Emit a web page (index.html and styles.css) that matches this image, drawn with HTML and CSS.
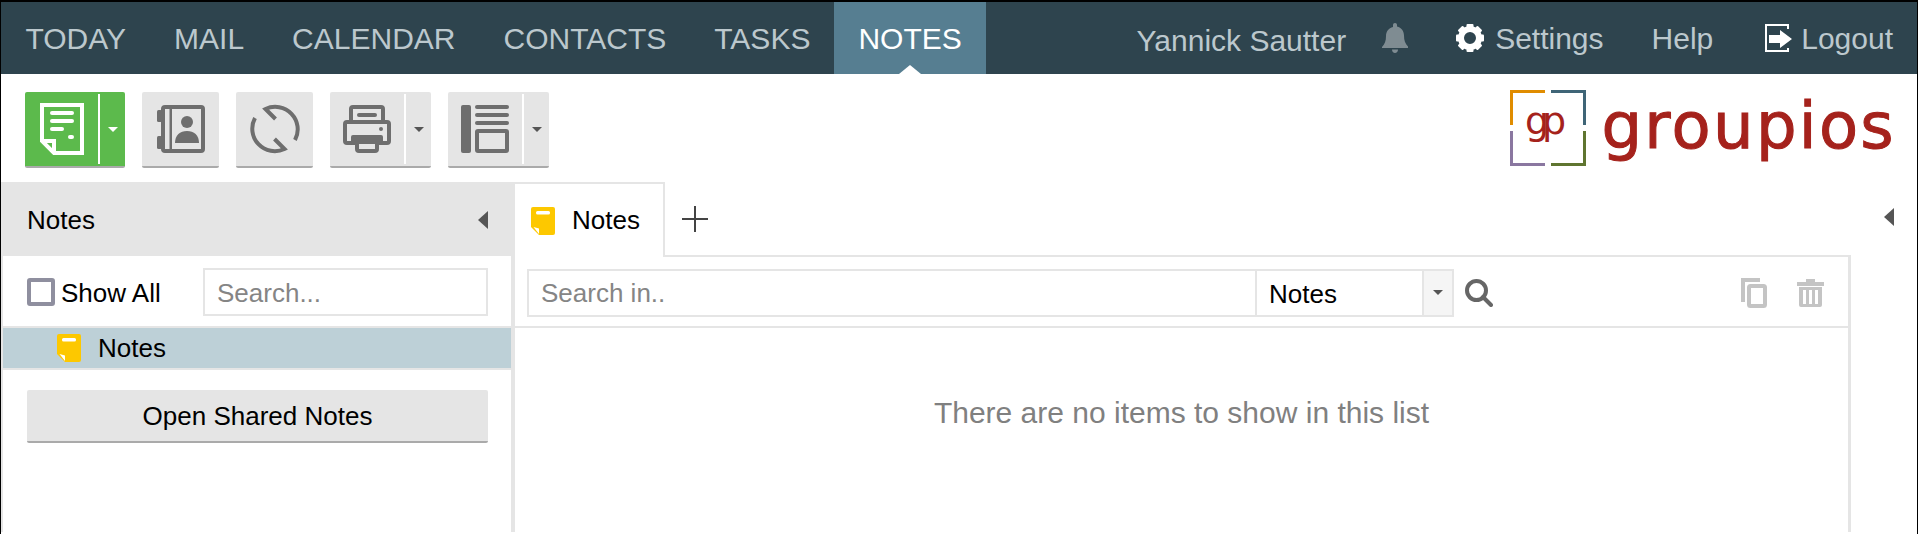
FILE: index.html
```html
<!DOCTYPE html>
<html lang="en">
<head>
  <meta charset="UTF-8" />
  <title>Notes</title>
  <link rel="stylesheet" href="styles.css">
</head>
<body>
  <div class="nav">
    <a class="tab">TODAY</a>
    <a class="tab">MAIL</a>
    <a class="tab">CALENDAR</a>
    <a class="tab">CONTACTS</a>
    <a class="tab">TASKS</a>
    <a class="tab active">NOTES</a>
    <div class="userbar">
      <span class="username">Yannick Sautter</span>
      <svg class="bell" width="26" height="30" viewBox="0 0 26 30"><path d="M13 0c1.200 0 2 .9 2 2v1.400c4.500 1 7 4.600 7 9.100 0 5 1.200 8 4 11v1.500H0V24c2.800-3 4-6 4-11 0-4.500 2.500-8.100 7-9.100V2c0-1.100.8-2 2-2zM10 26.500h6c0 2-1.300 3.500-3 3.500s-3-1.500-3-3.500z"/></svg>
      <a class="userlink settings">
        <svg width="28" height="28" viewBox="0 0 28 28"><circle cx="14" cy="14" r="9" fill="none" stroke="#fff" stroke-width="6"/><g fill="#fff"><rect x="10.500" y="0" width="7" height="6" rx="1"/><rect x="10.500" y="22" width="7" height="6" rx="1"/><rect x="10.500" y="0" width="7" height="6" rx="1" transform="rotate(45 14 14)"/><rect x="10.500" y="22" width="7" height="6" rx="1" transform="rotate(45 14 14)"/><rect x="10.500" y="0" width="7" height="6" rx="1" transform="rotate(90 14 14)"/><rect x="10.500" y="22" width="7" height="6" rx="1" transform="rotate(90 14 14)"/><rect x="10.500" y="0" width="7" height="6" rx="1" transform="rotate(135 14 14)"/><rect x="10.500" y="22" width="7" height="6" rx="1" transform="rotate(135 14 14)"/></g></svg>
        <span class="lbl">Settings</span>
      </a>
      <a class="userlink help"><span class="lbl">Help</span></a>
      <a class="userlink logout">
        <svg width="27" height="28" viewBox="0 0 27 28"><path d="M23 5V1H1v26h22v-3" fill="none" stroke="#fff" stroke-width="2"/><path d="M4 11h11V6l12 9-12 9v-5H4z" fill="#fff"/></svg>
        <span class="lbl">Logout</span>
      </a>
    </div>
  </div>

  <div class="toolbar">
    <div class="btn green">
      <span class="btn-main">
        <svg width="44" height="52" viewBox="0 0 44 52"><path d="M2 2h40v48H14L2 38z" fill="none" stroke="#fff" stroke-width="4"/><path d="M2 38h12v12" fill="none" stroke="#fff" stroke-width="4"/><g fill="#fff"><rect x="10" y="8" width="24" height="4" rx="2"/><rect x="10" y="16" width="24" height="4" rx="2"/><rect x="10" y="24" width="14" height="4" rx="2"/><rect x="28" y="32" width="6" height="4" rx="2"/></g></svg>
      </span>
      <span class="btn-drop"><i class="caret"></i></span>
    </div>
    <div class="btn">
      <span class="btn-main">
        <svg width="48" height="48" viewBox="0 0 48 48"><rect x="6" y="2" width="40" height="44" rx="2" fill="none" stroke="#6e6e6e" stroke-width="4"/><rect x="12.500" y="2" width="2.500" height="44" fill="#6e6e6e"/><rect x="0" y="5" width="5" height="12" rx="1.500" fill="#6e6e6e"/><rect x="0" y="31" width="5" height="13" rx="1.500" fill="#6e6e6e"/><circle cx="30" cy="17" r="6" fill="#6e6e6e"/><path d="M18 38c0-8 5-12 12-12s12 4 12 12z" fill="#6e6e6e"/></svg>
      </span>
    </div>
    <div class="btn">
      <span class="btn-main">
        <svg width="52" height="52" viewBox="0 0 52 52"><path d="M26.500 16L16.500 6A22.500 22.500 0 0 1 46 37M25.500 36L35.500 46A22.500 22.500 0 0 1 6 15" fill="none" stroke="#6e6e6e" stroke-width="4"/></svg>
      </span>
    </div>
    <div class="btn">
      <span class="btn-main wide">
        <svg width="48" height="48" viewBox="0 0 48 48"><rect x="8" y="2" width="32" height="22" rx="2" fill="#e5e5e5" stroke="#6e6e6e" stroke-width="4"/><rect x="14" y="8" width="20" height="4" rx="2" fill="#6e6e6e"/><rect x="2" y="17" width="44" height="21" rx="2" fill="#e5e5e5" stroke="#6e6e6e" stroke-width="4"/><circle cx="38" cy="24" r="2" fill="#6e6e6e"/><rect x="14" y="36" width="20" height="10" rx="2" fill="#e5e5e5" stroke="#6e6e6e" stroke-width="4"/><rect x="8" y="30" width="32" height="9" rx="2" fill="#6e6e6e"/></svg>
      </span>
      <span class="btn-drop"><i class="caret dark"></i></span>
    </div>
    <div class="btn">
      <span class="btn-main wide">
        <svg width="48" height="48" viewBox="0 0 48 48"><g fill="#6e6e6e"><rect x="0" y="0" width="10" height="48" rx="2"/><rect x="14" y="0" width="34" height="4" rx="2"/><rect x="14" y="8" width="34" height="4" rx="2"/><rect x="14" y="16" width="34" height="4" rx="2"/></g><rect x="16" y="26" width="30" height="20" rx="1" fill="none" stroke="#6e6e6e" stroke-width="4"/></svg>
      </span>
      <span class="btn-drop"><i class="caret dark"></i></span>
    </div>
    <div class="logo">
      <svg width="76" height="76" viewBox="0 0 76 76">
        <path d="M35 1.500H1.500V35" fill="none" stroke="#e08c00" stroke-width="3"/>
        <path d="M41 1.500h33.500V35" fill="none" stroke="#3f6577" stroke-width="3"/>
        <path d="M1.500 41v33.500H35" fill="none" stroke="#8a77a0" stroke-width="3"/>
        <path d="M74.500 41v33.500H41" fill="none" stroke="#5f7530" stroke-width="3"/>
        <text x="15" y="44" class="logo-mark">gp</text>
      </svg>
      <span class="logo-text">groupios</span>
    </div>
  </div>

  <div class="main">
    <div class="side">
      <div class="side-head">
        <span>Notes</span>
        <i class="arrow-left"></i>
      </div>
      <div class="side-filter">
        <span class="check"></span>
        <span class="check-label">Show All</span>
        <input class="side-search" type="text" placeholder="Search...">
      </div>
      <div class="tree-row">
        <svg class="note" width="24" height="28" viewBox="0 0 24 28"><path d="M2 0h20a2 2 0 0 1 2 2v24a2 2 0 0 1-2 2H8l-8-8V2a2 2 0 0 1 2-2z" fill="#fdc800"/><rect x="5" y="4" width="14" height="3.500" rx="1.500" fill="#fff"/><path d="M2.500 20L8 21.500V27z" fill="#fff"/></svg>
        <span class="tree-label">Notes</span>
      </div>
      <div class="side-action">
        <a class="open-shared">Open Shared Notes</a>
      </div>
    </div>

    <div class="content">
      <div class="tabs">
        <div class="doc-tab">
          <svg class="note" width="24" height="28" viewBox="0 0 24 28"><path d="M2 0h20a2 2 0 0 1 2 2v24a2 2 0 0 1-2 2H8l-8-8V2a2 2 0 0 1 2-2z" fill="#fdc800"/><rect x="5" y="4" width="14" height="3.500" rx="1.500" fill="#fff"/><path d="M2.500 20L8 21.500V27z" fill="#fff"/></svg>
          <span>Notes</span>
        </div>
        <svg class="plus" width="26" height="26" viewBox="0 0 26 26"><path d="M13 0v26M0 13h26" stroke="#444" stroke-width="2"/></svg>
      </div>
      <div class="panel">
        <div class="filter">
          <div class="search-group">
            <input class="search-in" type="text" placeholder="Search in..">
            <span class="scope">Notes</span>
            <span class="scope-drop"><i class="caret dark"></i></span>
          </div>
          <svg class="search-ico" width="28" height="28" viewBox="0 0 28 28"><circle cx="11.500" cy="11.500" r="9.500" fill="none" stroke="#666" stroke-width="4"/><path d="M18 18l8 8" stroke="#666" stroke-width="4" stroke-linecap="round"/></svg>
          <div class="actions">
            <svg width="27" height="30" viewBox="0 0 27 30"><path d="M20 2H3v22" fill="none" stroke="#c4c4c4" stroke-width="4"/><rect x="9" y="8" width="16" height="20" rx="1.500" fill="none" stroke="#c4c4c4" stroke-width="4"/></svg>
            <svg width="27" height="28" viewBox="0 0 27 28"><path d="M0 3h9V0h9v3h9v4H0z" fill="#c4c4c4"/><path d="M2 8h23v18a2 2 0 0 1-2 2H4a2 2 0 0 1-2-2zM6 11v14h3V11zM12 11v14h3V11zM18 11v14h3V11z" fill="#c4c4c4" fill-rule="evenodd"/></svg>
          </div>
        </div>
        <div class="empty">There are no items to show in this list</div>
      </div>
    </div>

    <div class="right-rail"><i class="arrow-left"></i></div>
  </div>
</body>
</html>
```

FILE: styles.css
```css
html, body {
  height: 100%;
}

body {
  margin: 0;
  border-top: 2px solid #000;
  border-left: 1px solid #000;
  border-right: 1px solid #000;
  box-sizing: border-box;
  font-family: "Liberation Sans", Arial, sans-serif;
  font-size: 26px;
  color: #000;
  background: #fff;
  overflow: hidden;
}

.nav {
  display: flex;
  height: 72px;
  background: #2e444e;
  color: #bcc8cd;
  padding-left: 0.5px;
  font-size: 30px;
}

.tab {
  display: flex;
  align-items: center;
  padding: 1px 24px 0;
  position: relative;
}

.tab.active {
  background: #567e91;
  color: #fff;
}

.tab.active::after {
  content: "";
  position: absolute;
  left: 50%;
  bottom: 0;
  margin-left: -11px;
  border-left: 11px solid transparent;
  border-right: 11px solid transparent;
  border-bottom: 9px solid #fff;
}

.userbar {
  margin-left: auto;
  display: flex;
  align-items: center;
  padding-right: 24px;
}

.username {
  padding-top: 6px;
}

.bell {
  fill: #7f8c92;
  margin-left: 36px;
}

.userlink {
  display: flex;
  align-items: center;
}

.userlink .lbl {
  padding-top: 2px;
}

.settings {
  gap: 11px;
  margin-left: 48px;
}

.help {
  margin-left: 48px;
}

.logout {
  gap: 9px;
  margin-left: 52px;
}

.toolbar {
  display: flex;
  height: 108px;
  box-sizing: border-box;
  padding: 18px 21px 0 24px;
  gap: 17px;
  align-items: flex-start;
}

.btn {
  display: flex;
  height: 74px;
  background: #e5e5e5;
  border-bottom: 2px solid #aaa;
  border-radius: 2px;
}

.btn.green {
  background: #5cba4c;
}

.btn-main {
  display: flex;
  align-items: center;
  justify-content: center;
  width: 77px;
}

.btn.green .btn-main {
  width: 73px;
}

.btn-main.wide {
  width: 74px;
}

.btn-drop {
  display: flex;
  align-items: center;
  justify-content: center;
  box-sizing: border-box;
  width: 27px;
  border-left: 2px solid #fff;
  margin: 2px 0;
}

.caret {
  width: 0;
  height: 0;
  border-left: 5px solid transparent;
  border-right: 5px solid transparent;
  border-top: 5px solid #fff;
}

.caret.dark {
  border-top-color: #555;
}

.logo {
  margin-left: auto;
  display: flex;
  align-items: flex-start;
  gap: 15px;
  margin-top: -2px;
}

.logo-mark {
  font-family: "DejaVu Sans", sans-serif;
  font-size: 38px;
  letter-spacing: -7px;
  fill: #a5221c;
}

.logo-text {
  font-family: "DejaVu Sans", sans-serif;
  font-size: 64px;
  letter-spacing: 2.300px;
  line-height: 64px;
  color: #a5221c;
  -webkit-text-stroke: 1px #a5221c;
  margin-top: 4px;
}

.main {
  display: flex;
  height: 350px;
}

.side {
  width: 508px;
  border-left: 2px solid #e5e5e5;
  border-right: 4px solid #e5e5e5;
}

.side-head {
  display: flex;
  align-items: center;
  justify-content: space-between;
  box-sizing: border-box;
  height: 74px;
  padding: 2px 23px 0 24px;
  background: #e5e5e5;
}

.arrow-left {
  display: block;
  width: 0;
  height: 0;
  border-top: 9px solid transparent;
  border-bottom: 9px solid transparent;
  border-right: 10px solid #555;
}

.side-filter {
  display: flex;
  align-items: center;
  box-sizing: border-box;
  height: 70px;
  padding: 2px 23px 0 24px;
}

.check {
  width: 28px;
  height: 28px;
  box-sizing: border-box;
  border: 4px solid #8f8f9f;
  border-radius: 3px;
}

.check-label {
  margin-left: 6px;
  padding-top: 2px;
}

.side-search {
  margin-left: auto;
  width: 285px;
  height: 48px;
  box-sizing: border-box;
  border: 2px solid #e5e5e5;
  padding: 2px 12px 0;
  font: inherit;
  outline: none;
}

input::placeholder {
  color: #858585;
  opacity: 1;
}

.tree-row {
  display: flex;
  align-items: center;
  height: 40px;
  padding-left: 54px;
  gap: 17px;
  background: #bdd0d7;
  border-top: 2px solid #e5e5e5;
  border-bottom: 2px solid #e5e5e5;
}

.tree-label {
  padding-top: 1px;
}

.side-action {
  padding: 20px 23px 0 24px;
}

.open-shared {
  display: block;
  height: 51px;
  line-height: 53px;
  text-align: center;
  background: #e5e5e5;
  border-bottom: 2px solid #aaa;
  border-radius: 2px;
}

.content {
  width: 1336px;
}

.tabs {
  display: flex;
  align-items: center;
  height: 73px;
}

.doc-tab {
  display: flex;
  align-items: center;
  gap: 17px;
  box-sizing: border-box;
  width: 150px;
  height: 75px;
  margin-bottom: -2px;
  padding-left: 16px;
  background: #fff;
  border-top: 2px solid #e5e5e5;
  border-right: 2px solid #e5e5e5;
  position: relative;
}

.plus {
  margin-left: 17px;
}

.panel {
  height: 277px;
  box-sizing: border-box;
  border-top: 2px solid #e5e5e5;
  border-right: 3px solid #e5e5e5;
}

.filter {
  display: flex;
  align-items: center;
  height: 71px;
  box-sizing: border-box;
  padding: 2px 0 0 12px;
  border-bottom: 2px solid #e5e5e5;
}

.search-group {
  display: flex;
  height: 48px;
  width: 927px;
  box-sizing: border-box;
  border: 2px solid #e5e5e5;
}

.search-in {
  flex: 1;
  min-width: 0;
  border: none;
  padding: 2px 12px 0;
  font: inherit;
  outline: none;
}

.scope {
  width: 167px;
  box-sizing: border-box;
  border-left: 2px solid #e5e5e5;
  padding-left: 12px;
  line-height: 46px;
}

.scope-drop {
  display: flex;
  align-items: center;
  justify-content: center;
  width: 30px;
  box-sizing: border-box;
  border-left: 2px solid #e5e5e5;
  background: #f5f5f5;
}

.search-ico {
  margin-left: 11px;
}

.actions {
  display: flex;
  align-items: center;
  gap: 30px;
  margin-left: auto;
  padding-right: 24px;
}

.empty {
  margin-top: 68px;
  font-size: 30px;
  text-align: center;
  color: #808080;
}

.right-rail {
  flex: 1;
  padding: 26px 0 0 33px;
}
```
